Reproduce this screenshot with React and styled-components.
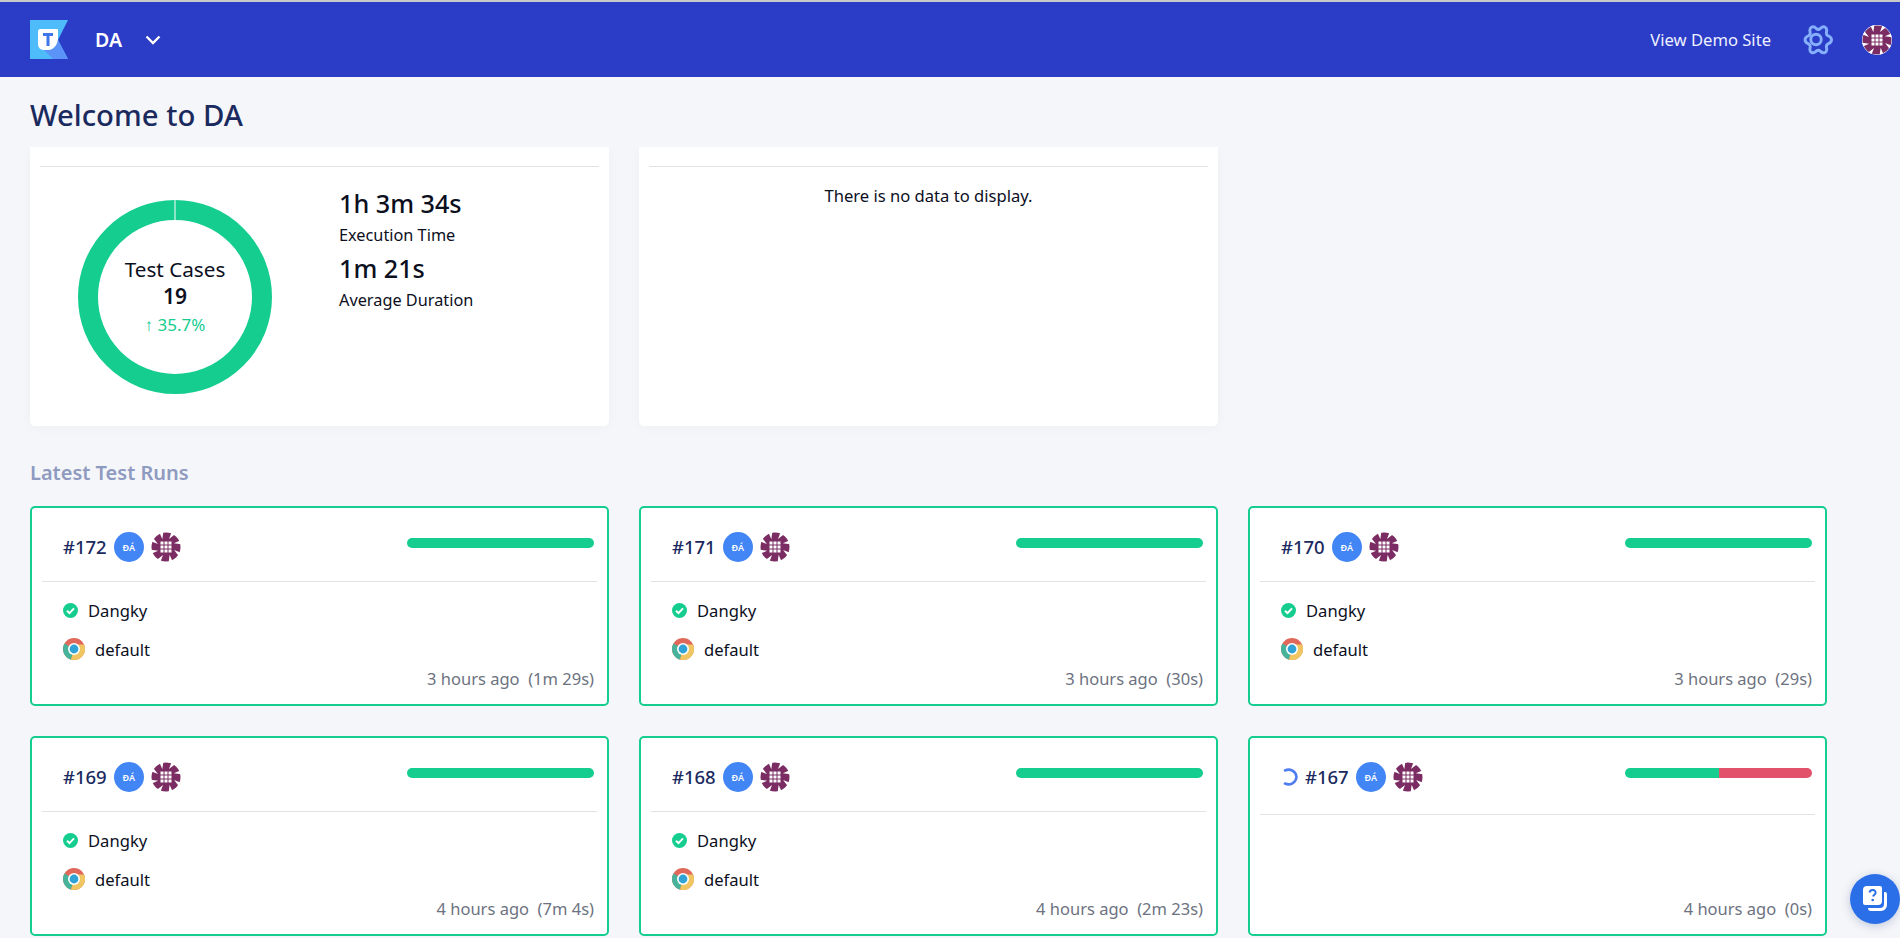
import React from 'react';
import styled, { createGlobalStyle } from 'styled-components';

const Global = createGlobalStyle`
  html, body { margin: 0; padding: 0; height: 100%; overflow: hidden; }
  body { background: #f5f6f9; font-family: "Noto Sans", "Open Sans", sans-serif; color: #0c0f1e; }
  * { box-sizing: border-box; }
`;

const green = '#16cd90';

const Page = styled.div`
  height: 938px;
  display: flex;
  flex-direction: column;
  border-top: 2px solid #c9c9cc;
  overflow: hidden;
  position: relative;
`;

const Header = styled.header`
  flex: none;
  height: 75px;
  background: #2b3cc6;
  display: flex;
  align-items: center;
  padding: 0 8px 0 30px;
  color: #fff;
`;

const ProjectName = styled.span`
  font-size: 19.5px;
  font-weight: 600;
  margin-left: 27px;
`;

const Chevron = styled.svg`
  margin-left: 23px;
  width: 16px;
  height: 10px;
`;

const HeaderRight = styled.div`
  margin-left: auto;
  display: flex;
  align-items: center;
`;

const DemoLink = styled.span`
  font-size: 16.6px;
  color: #eef1ff;
`;

const Gear = styled.svg`
  margin-left: 28px;
  width: 34px;
  height: 33px;
`;

const HeaderAvatar = styled.div`
  margin-left: 29px;
  width: 30px;
  height: 30px;
  border-radius: 50%;
  overflow: hidden;
  background: #fff;
`;

const Title = styled.h1`
  flex: none;
  margin: 0;
  padding: 5px 30px 0;
  height: 70px;
  display: flex;
  align-items: center;
  font-size: 29.3px;
  font-weight: 500;
  color: #1b2a5e;
`;

const Content = styled.main`
  flex: 1;
  overflow: hidden;
  padding: 0 30px;
`;

const Row = styled.div`
  display: grid;
  grid-template-columns: repeat(3, 579px);
  gap: 30px;
`;

const Panel = styled.section`
  background: #fff;
  height: 279px;
  border-radius: 0 0 5px 5px;
  padding: 19px 10px 0;
  box-shadow: 0 2px 12px rgba(40, 50, 90, 0.03);
`;

const PanelRule = styled.div`
  border-top: 1px solid #e1e2e5;
`;

const PanelBody = styled.div`
  display: flex;
  padding: 33px 0 0 38px;
`;

const Donut = styled.div`
  position: relative;
  width: 194px;
  height: 194px;
  flex: none;
`;

const DonutText = styled.div`
  position: absolute;
  inset: 0;
  display: flex;
  flex-direction: column;
  align-items: center;
  padding-top: 55px;
`;

const DonutLabel = styled.div`
  font-size: 20.7px;
  line-height: 28px;
`;

const DonutValue = styled.div`
  font-size: 21px;
  line-height: 26px;
  font-weight: 600;
`;

const DonutDelta = styled.div`
  font-size: 17px;
  line-height: 24px;
  margin-top: 4px;
  color: ${green};
`;

const Stats = styled.div`
  margin-left: 67px;
  margin-top: -13px;
`;

const StatValue = styled.div`
  font-size: 25.2px;
  line-height: 32px;
  font-weight: 500;
`;

const StatLabel = styled.div`
  font-size: 16.3px;
  line-height: 24px;
  margin: 4px 0 5px;
`;

const NoData = styled.div`
  text-align: center;
  font-size: 16.6px;
  line-height: 24px;
  padding-top: 17px;
`;

const SectionTitle = styled.h2`
  margin: 33px 0 19px;
  font-size: 20px;
  line-height: 28px;
  font-weight: 600;
  color: #8e9ac0;
`;

const RunCard = styled.article`
  height: 200px;
  background: #fff;
  border: 2px solid ${green};
  border-radius: 5px;
  padding: 0 10px;
  display: flex;
  flex-direction: column;
`;

const RunHead = styled.div`
  flex: none;
  height: ${p => (p.$tall ? '77px' : '74px')};
  border-bottom: 1px solid #e1e2e5;
  display: flex;
  align-items: flex-start;
  justify-content: space-between;
  padding: 24px 3px 0 21px;
`;

const RunId = styled.div`
  display: flex;
  align-items: center;
  gap: 7px;
  height: 30px;
`;

const RunNumber = styled.span`
  font-size: 18.5px;
  font-weight: 500;
  color: #1b2a5e;
  margin-bottom: 2px;
`;

const Initials = styled.div`
  width: 30px;
  height: 30px;
  border-radius: 50%;
  background: #4285f4;
  color: #fff;
  font-size: 9px;
  font-weight: 600;
  display: flex;
  align-items: center;
  justify-content: center;
`;

const Spinner = styled.svg`
  width: 18px;
  height: 18px;
  margin-right: -1px;
`;

const Bar = styled.div`
  width: 187px;
  height: 10px;
  margin-top: 6px;
  display: flex;
  border-radius: 5px;
  overflow: hidden;
`;

const BarPart = styled.div`
  flex: 1;
  background: ${p => p.$color};
`;

const RunBody = styled.div`
  flex: 1;
  position: relative;
  padding: 16px 21px 0;
`;

const InfoLine = styled.div`
  display: flex;
  align-items: center;
  font-size: 16.6px;
  height: 24px;
  margin-bottom: ${p => (p.$last ? 0 : '15px')};
`;

const InfoIcon = styled.svg`
  flex: none;
  margin-right: ${p => p.$gap}px;
`;

const Time = styled.div`
  position: absolute;
  right: 3px;
  bottom: 13px;
  font-size: 16.5px;
  line-height: 24px;
  color: #6d7280;
  white-space: pre;
`;

const HelpButton = styled.button`
  position: absolute;
  right: 0;
  top: 872px;
  width: 50px;
  height: 50px;
  border: 0;
  padding: 0;
  border-radius: 50%;
  background: #2a6fe8;
  box-shadow: 0 2px 10px rgba(30, 60, 140, 0.25);
  display: flex;
  align-items: center;
  justify-content: center;
`;

const notches = [10, 55, 100, 145, 190, 235, 280, 325];

// generated pattern avatar, same drawing everywhere
const Identicon = () => (
  <svg width="30" height="30" viewBox="0 0 30 30">
    <circle cx="15" cy="15" r="14.500" fill="#7b2c63" />
    <g fill="#fff">
      {notches.map(a => (
        <path key={a} d="M18 -1L22.500 0L16.500 6.500z" transform={`rotate(${a} 15 15)`} />
      ))}
      {[9.500, 13.500, 17.500].map(y =>
        [9.500, 13.500, 17.500].map(x => <rect key={`${x}-${y}`} x={x} y={y} width="3" height="3" />)
      )}
    </g>
  </svg>
);

const ChromeIcon = () => (
  <InfoIcon $gap={10} width="22" height="22" viewBox="0 0 22 22">
    <circle cx="11" cy="11" r="11" fill="#e0685a" />
    <path d="M11 11L1.5 5.5A11 11 0 0 0 8 21.6z" fill="#46b39a" />
    <path d="M11 11l-3 10.6A11 11 0 0 0 21 6.4H11z" fill="#f0c662" />
    <circle cx="11" cy="11" r="6" fill="#fff" />
    <circle cx="11" cy="11" r="4.4" fill="#2fa3d6" />
  </InfoIcon>
);

const CheckIcon = () => (
  <InfoIcon $gap={10} width="15" height="15" viewBox="0 0 15 15">
    <circle cx="7.5" cy="7.5" r="7.5" fill={green} />
    <path d="M4 7.8l2.5 2.4L11 5.4" fill="none" stroke="#fff" strokeWidth="2" />
  </InfoIcon>
);

const runs = [
  { id: 172, time: '3 hours ago  (1m 29s)' },
  { id: 171, time: '3 hours ago  (30s)' },
  { id: 170, time: '3 hours ago  (29s)' },
  { id: 169, time: '4 hours ago  (7m 4s)' },
  { id: 168, time: '4 hours ago  (2m 23s)' },
  { id: 167, time: '4 hours ago  (0s)', running: true },
];

const Run = ({ run }) => (
  <RunCard>
    <RunHead $tall={run.running}>
      <RunId>
        {run.running && (
          <Spinner viewBox="0 0 18 18">
            <path d="M4 2.500A8 8 0 0 1 15.500 9A8 8 0 0 1 4 15.500" fill="none" stroke="#4f7cf0" strokeWidth="2.600" strokeLinecap="round" />
          </Spinner>
        )}
        <RunNumber>#{run.id}</RunNumber>
        <Initials>ĐÁ</Initials>
        <Identicon />
      </RunId>
      <Bar>
        <BarPart $color={green} />
        {run.running && <BarPart $color="#e2526a" />}
      </Bar>
    </RunHead>
    <RunBody>
      {!run.running && (
        <>
          <InfoLine>
            <CheckIcon />
            Dangky
          </InfoLine>
          <InfoLine $last>
            <ChromeIcon />
            default
          </InfoLine>
        </>
      )}
      <Time>{run.time}</Time>
    </RunBody>
  </RunCard>
);

export default function App() {
  return (
    <Page>
      <Global />
      <Header>
        <svg width="38" height="39" viewBox="0 0 38 39">
          <path d="M0 0h38L28 20l10 19H0z" fill="#4ebcfb" />
          <path d="M12 28l11 11h15L28 20z" fill="#5b93f8" />
          <path d="M10.500 9H28V18c0 6-4 12-10 12h-4c-4 0-6-3-6-6V11.500a2.500 2.500 0 0 1 2.500-2.500z" fill="#fff" />
          <path d="M13 13h10v3h-3.500v10h-3V16H13z" fill="#3f77ea" />
        </svg>
        <ProjectName>DA</ProjectName>
        <Chevron viewBox="0 0 16 10">
          <path d="M1.500 1.500L8 8l6.500-6.500" fill="none" stroke="#fff" strokeWidth="2.400" />
        </Chevron>
        <HeaderRight>
          <DemoLink>View Demo Site</DemoLink>
          <Gear viewBox="1.600 2 20.800 20" fill="none" stroke="#86b0fb" strokeWidth="1.800">
            <g transform="rotate(90 12 12)">
              <path d="M12.200 2.500c1 0 2 .9 2.500 2.100.4.800 1.300 1.200 2.200 1 1.300-.3 2.500-.1 3 .8.500.9.100 2.100-.8 3-.6.700-.6 1.700 0 2.400.9 1 1.300 2.100.8 3-.5.900-1.700 1.100-3 .8-.9-.2-1.800.2-2.200 1-.5 1.200-1.500 2.100-2.500 2.100s-2-.9-2.500-2.100c-.4-.8-1.300-1.200-2.200-1-1.300.3-2.500.1-3-.8-.5-.9-.1-2.100.8-3 .6-.7.6-1.700 0-2.400-.9-1-1.300-2.100-.8-3 .5-.9 1.700-1.100 3-.8.9.2 1.800-.2 2.200-1 .5-1.200 1.500-2.100 2.500-2.100z" />
              <circle cx="12" cy="12" r="3.200" />
            </g>
          </Gear>
          <HeaderAvatar>
            <Identicon />
          </HeaderAvatar>
        </HeaderRight>
      </Header>
      <Title>Welcome to DA</Title>
      <Content>
        <Row>
          <Panel>
            <PanelRule />
            <PanelBody>
              <Donut>
                <svg width="194" height="194" viewBox="0 0 194 194">
                  <circle cx="97" cy="97" r="87" fill="none" stroke={green} strokeWidth="20" />
                  <rect x="96.500" y="0" width="1" height="20" fill="#fff" />
                </svg>
                <DonutText>
                  <DonutLabel>Test Cases</DonutLabel>
                  <DonutValue>19</DonutValue>
                  <DonutDelta>↑ 35.7%</DonutDelta>
                </DonutText>
              </Donut>
              <Stats>
                <StatValue>1h 3m 34s</StatValue>
                <StatLabel>Execution Time</StatLabel>
                <StatValue>1m 21s</StatValue>
                <StatLabel>Average Duration</StatLabel>
              </Stats>
            </PanelBody>
          </Panel>
          <Panel>
            <PanelRule />
            <NoData>There is no data to display.</NoData>
          </Panel>
        </Row>
        <SectionTitle>Latest Test Runs</SectionTitle>
        <Row>
          {runs.map(run => (
            <Run key={run.id} run={run} />
          ))}
        </Row>
      </Content>
      <HelpButton aria-label="Help">
        <svg width="26" height="28" viewBox="0 0 26 28">
          <path d="M22 7h1a2 2 0 0 1 2 2v11a6 6 0 0 1-6 6H9a3 3 0 0 1-3-3h12a4 4 0 0 0 4-4z" fill="#fff" />
          <path d="M5 1h13a2 2 0 0 1 2 2v13a4 4 0 0 1-4 4H3a2 2 0 0 1-2-2V5a4 4 0 0 1 4-4z" fill="#fff" />
          <path d="M7.500 7.500c.4-1.800 2-2.800 3.700-2.500 1.800.3 2.800 1.800 2.300 3.300-.4 1.300-2.200 1.700-2.400 3.200" fill="none" stroke="#2a6fe8" strokeWidth="2" />
          <circle cx="10.700" cy="15" r="1.300" fill="#2a6fe8" />
        </svg>
      </HelpButton>
    </Page>
  );
}
